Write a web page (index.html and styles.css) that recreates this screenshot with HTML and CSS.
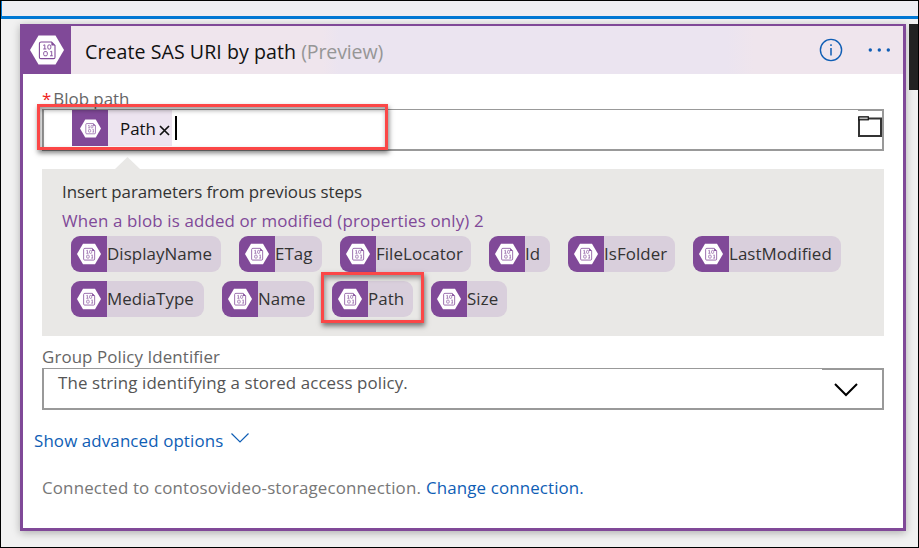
FILE: index.html
```html
<!DOCTYPE html>
<html lang="en">
<head>
<meta charset="utf-8">
<title>Create SAS URI by path</title>
<link rel="stylesheet" href="styles.css">
</head>
<body>
<svg class="defs" width="0" height="0" aria-hidden="true">
  <symbol id="blob" viewBox="0 0 34 30">
    <path d="M8.5 0.5H25.5L34 15L25.5 29.5H8.5L0 15Z" fill="#fff"/>
    <path d="M11.2 7H21.6L25 10.4V22.2Q25 23.6 23.6 23.6H10.8Q9.4 23.6 9.4 22.2V8.6Q9.4 7 11.2 7Z" fill="#fff" stroke="#804998" stroke-width="1.1"/>
    <path d="M21.4 7V10.6H25Z" fill="#804998"/>
    <g fill="none" stroke="#804998" stroke-width="0.9">
      <path d="M13.2 10.4L14.8 9.8V14M13.2 14H16.3M20.2 16.8L21.7 16.3V20.8M20 20.8H22.8"/>
      <rect x="17.8" y="9.9" width="3" height="4.2" rx="1.2"/>
      <rect x="13.7" y="16.6" width="3.6" height="4.2" rx="1.2"/>
    </g>
  </symbol>
</svg>
<div class="window">
  <div class="strip"></div>
  <div class="canvas">
    <section class="card">
      <header class="head">
        <div class="head-icon"><svg width="34" height="30"><use href="#blob"/></svg></div>
        <h1><span class="t-title">Create SAS URI by path</span> <span class="preview">(Preview)</span></h1>
        <svg class="info" width="24" height="24" viewBox="0 0 24 24"><circle cx="12" cy="12" r="10.6" fill="none" stroke="#0f5eb5" stroke-width="1.4"/><path d="M12 10V17.5M12 6.3V8" stroke="#0f5eb5" stroke-width="1.5"/></svg>
        <svg class="dots" width="24" height="4" viewBox="0 0 24 4"><g fill="#0f5eb5"><circle cx="2.3" cy="2" r="1.7"/><circle cx="11.3" cy="2" r="1.7"/><circle cx="20.3" cy="2" r="1.7"/></g></svg>
      </header>
      <div class="body">
        <div class="label label-blob"><span class="star">*</span><span class="t-blob">Blob path</span></div>
        <div class="input">
          <div class="token"><div class="token-icon"><svg width="21" height="19"><use href="#blob"/></svg></div><span class="t-token">Path</span><svg class="x" width="11" height="11" viewBox="0 0 11 11"><path d="M1 1L10 10M10 1L1 10" stroke="#111" stroke-width="1.7"/></svg></div>
          <i class="caret"></i>
          <div class="folder"><svg width="24" height="22" viewBox="0 0 24 22"><path d="M1 1V20H23V2.5H10" fill="none" stroke="#333" stroke-width="2"/><rect x="0.8" y="0.8" width="9.5" height="3" fill="#bbb" stroke="#111" stroke-width="1.2"/></svg></div>
          <div class="mark mark-input"></div>
        </div>
        <div class="panel">
          <svg class="arrow" width="26" height="12" viewBox="0 0 26 12"><path d="M0 12L12.5 0L25 12Z" fill="#e9e8e6"/></svg>
          <p class="insert"><span class="t-insert">Insert parameters from previous steps</span></p>
          <p class="when"><span class="t-when">When a blob is added or modified (properties only) 2</span></p>
          <div class="row">
            <div class="chip w150"><b><svg width="24" height="22"><use href="#blob"/></svg></b><span>DisplayName</span></div>
            <div class="chip w83"><b><svg width="24" height="22"><use href="#blob"/></svg></b><span>ETag</span></div>
            <div class="chip w131"><b><svg width="24" height="22"><use href="#blob"/></svg></b><span>FileLocator</span></div>
            <div class="chip w61"><b><svg width="24" height="22"><use href="#blob"/></svg></b><span>Id</span></div>
            <div class="chip w107"><b><svg width="24" height="22"><use href="#blob"/></svg></b><span>IsFolder</span></div>
            <div class="chip w148"><b><svg width="24" height="22"><use href="#blob"/></svg></b><span>LastModified</span></div>
          </div>
          <div class="row">
            <div class="chip w133"><b><svg width="24" height="22"><use href="#blob"/></svg></b><span>MediaType</span></div>
            <div class="chip w92"><b><svg width="24" height="22"><use href="#blob"/></svg></b><span>Name</span></div>
            <div class="chip w81"><b><svg width="24" height="22"><use href="#blob"/></svg></b><span>Path</span><i class="mark mark-path"></i></div>
            <div class="chip w76"><b><svg width="24" height="22"><use href="#blob"/></svg></b><span>Size</span></div>
          </div>
        </div>
        <div class="label label-group"><span class="t-group">Group Policy Identifier</span></div>
        <div class="select">
          <span class="t-string">The string identifying a stored access policy.</span>
          <div class="drop"><svg width="24" height="14" viewBox="0 0 24 14"><path d="M1 1L12 12L23 1" fill="none" stroke="#000" stroke-width="2"/></svg></div>
        </div>
        <div class="advanced"><span class="t-adv">Show advanced options</span><svg width="18" height="10" viewBox="0 0 18 10"><path d="M0.5 0.5L9 9L17.5 0.5" fill="none" stroke="#0f5eb5" stroke-width="1.2"/></svg></div>
        <div class="conn"><span class="t-conn">Connected to contosovideo-storageconnection.</span><a class="t-change">Change connection.</a></div>
      </div>
    </section>
    <div class="side"></div>
  </div>
</div>
</body>
</html>
```
FILE: styles.css
```css
* { box-sizing: border-box; }
body { margin: 0; font-family: "Open Sans", "Noto Sans", sans-serif; font-size: 16.9px; color: #333; }
h1, p { margin: 0; font-weight: 400; }
svg { display: block; flex: none; }
.defs { position: absolute; }
span, a { white-space: nowrap; }
.window { width: 919px; height: 548px; border: 1px solid #000; background: #f1f1f1; overflow: hidden; }
.strip { height: 18px; background: #eeedf2; border-left: 1px solid #0078d4; border-bottom: 3px solid #0078d4; }
.canvas { display: flex; padding: 5px 0 0 19px; justify-content: space-between; }
.card { width: 886px; height: 507px; border: 3px solid #804998; border-top-width: 2px; background: #fff; box-shadow: 0 2px 8px rgba(0,0,0,.28); }
.side { width: 9px; height: 66px; background: #222; }
.head { height: 48px; display: flex; align-items: center; background: linear-gradient(90deg, #efe5ed 0 34%, #ebe4f0 36% 80%, #efe5ed 83%); }
.head-icon { width: 48px; height: 48px; background: #804998; display: flex; align-items: center; padding-left: 7px; }
h1 { flex: 1; margin-left: 14px; padding-top: 3px; font-size: 19.6px; line-height: 26px; color: #111; }
.t-title { letter-spacing: .05px; }
.preview { color: #969696; letter-spacing: -.15px; }
.info { margin-right: 25px; }
.dots { margin-right: 11px; }
.body { padding: 0 19px; }
.label { color: #666; line-height: 24px; }
.label-blob { margin-top: 13px; height: 22px; overflow: hidden; display: flex; gap: 2px; }
.star { color: #e22; }
.input { position: relative; height: 42px; border: 2px solid #999; border-top-width: 1px; display: flex; padding-left: 28px; }
.token { display: flex; align-items: center; width: 100px; height: 36px; background: #ede4f0; color: #111; }
.token-icon { width: 36px; height: 36px; padding-left: 8px; background: #804998; display: flex; align-items: center; margin-right: 12px; }
.x { margin: 5px 0 0 3px; }
.caret { width: 2px; height: 24px; background: #000; margin: 6px 0 0 3px; }
.folder { margin-left: auto; width: 24px; border-top: 1px solid #999; padding-top: 5px; }
.mark { position: absolute; border: 3px solid #fb4747; box-shadow: 1px 3px 5px rgba(0,0,0,.5), inset 1px 3px 5px rgba(0,0,0,.4); }
.mark-input { left: -7px; top: -6px; width: 351px; height: 46px; }
.panel { position: relative; margin-top: 18px; height: 167px; background: #e9e8e6; padding: 9px 0 0 20px; }
.arrow { position: absolute; left: 73px; top: -12px; }
.insert, .when { line-height: 28px; }
.t-insert { letter-spacing: -.08px; }
.when { color: #804998; height: 30px; line-height: 30px; }
.t-when { letter-spacing: .15px; }
.row { display: flex; gap: 18px; margin-left: 9px; margin-bottom: 9px; }
.chip { position: relative; height: 36px; display: flex; align-items: center; border-radius: 9px; background: #d9cfdc; }
.chip b { width: 36px; height: 36px; flex: none; padding-left: 6px; display: flex; align-items: center; background: #804998; border-radius: 9px 0 0 9px; }
.chip span { padding-bottom: 2px; letter-spacing: .07px; }
.w150 { width: 150px; } .w83 { width: 83px; } .w131 { width: 131px; } .w61 { width: 61px; }
.w107 { width: 107px; } .w148 { width: 148px; } .w133 { width: 133px; } .w92 { width: 92px; }
.w81 { width: 81px; } .w76 { width: 76px; }
.mark-path { left: -11px; top: -9px; width: 103px; height: 51px; }
.label-group { height: 32px; padding-top: 9px; }
.t-group { letter-spacing: .1px; }
.select { height: 42px; border: 2px solid #999; border-top-width: 1px; display: flex; padding-left: 14px; color: #555; line-height: 28px; }
.t-string { letter-spacing: .12px; }
.drop { margin-left: auto; width: 60px; border-top: 1px solid #999; padding: 13px 0 0 12px; }
.advanced { margin: 18px 0 0 -8px; display: flex; line-height: 26px; color: #0f5eb5; }
.t-adv { letter-spacing: .12px; }
.advanced svg { margin: 5px 0 0 8px; }
.conn { margin-top: 21px; display: flex; gap: 5px; line-height: 26px; color: #777; }
.t-conn { letter-spacing: .16px; }
.t-change { color: #0f5eb5; letter-spacing: .13px; }
```
